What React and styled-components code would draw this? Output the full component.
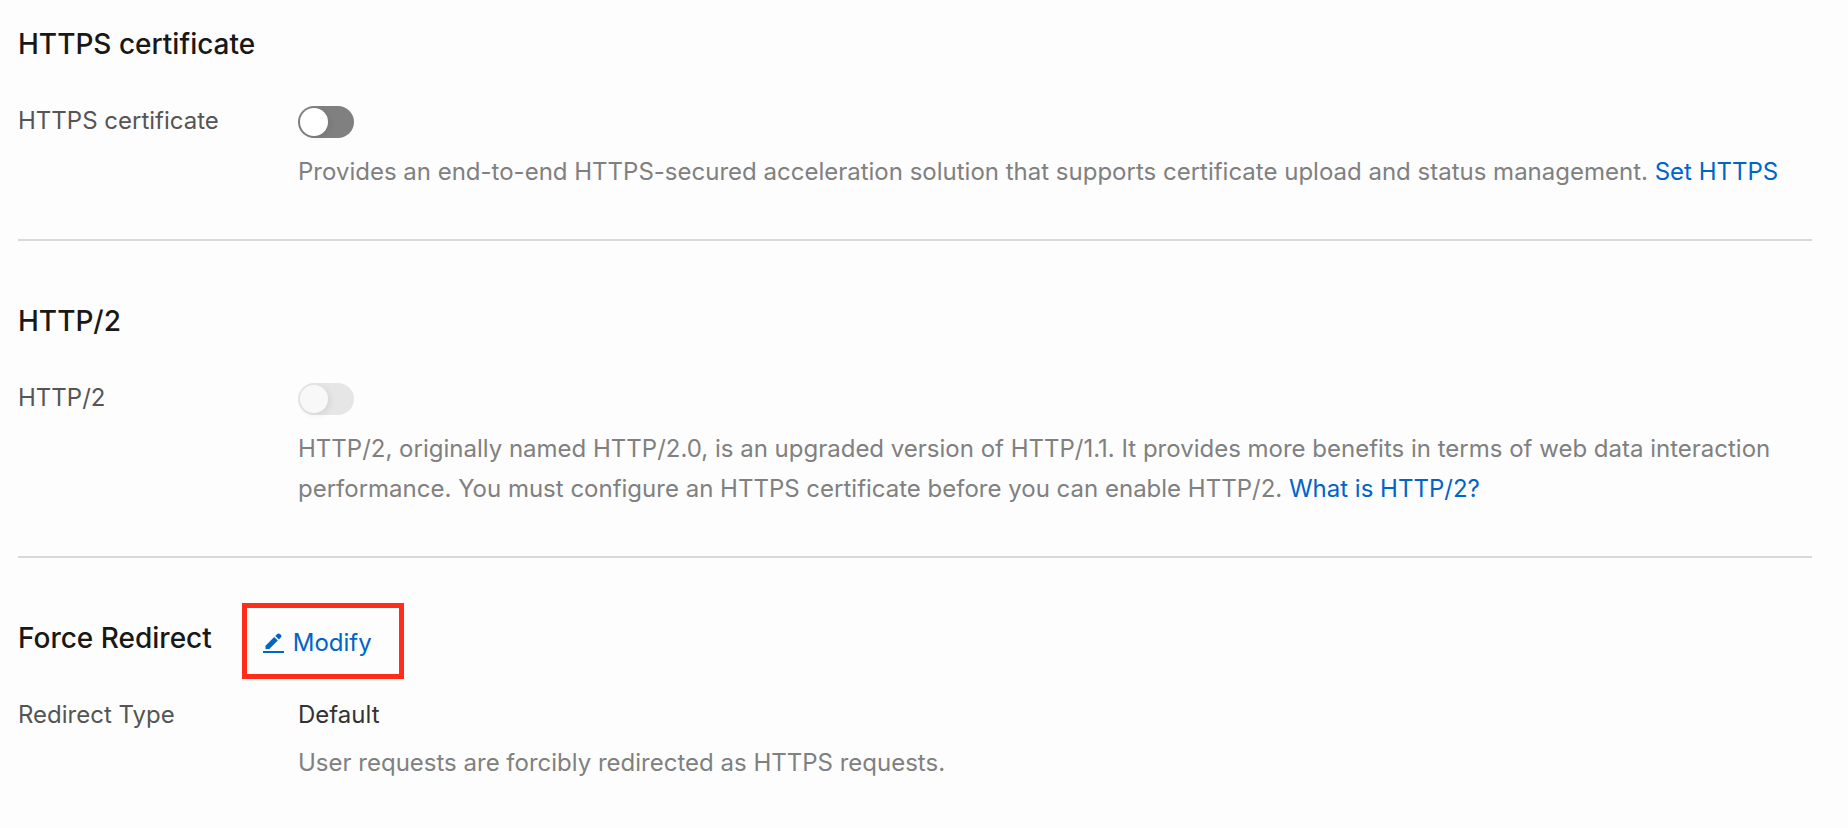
import React, { useState } from 'react';
import styled, { createGlobalStyle } from 'styled-components';

const GlobalStyle = createGlobalStyle`
  body {
    margin: 0;
    background: #fdfdfd;
    font-family: Inter, "Liberation Sans", sans-serif;
    font-size: 24px;
    line-height: 40px;
    color: #333;
  }
`

const Page = styled.main`
  padding: 0 36px 0 18px;
`

const Section = styled.section`
  padding: ${props => (props.$first ? '24px' : '60px')} 0 47px;
  border-bottom: ${props => (props.$last ? 'none' : '2px solid #d9d9d9')};
`

const Header = styled.header`
  display: flex;
  align-items: flex-start;
  gap: 30px;
  height: 40px;
  margin-bottom: 37px;
`

const Title = styled.h2`
  margin: 0;
  font-size: 28px;
  font-weight: 500;
  color: #181818;
`

const Row = styled.div`
  display: grid;
  grid-template-columns: 280px 1fr;
`

const Label = styled.label`
  color: #555;
`

const Switch = styled.input`
  appearance: none;
  display: block;
  box-sizing: border-box;
  width: 56px;
  height: 32px;
  margin: 5px 0 14px;
  padding: 2px;
  border-radius: 16px;
  background: #808080;
  cursor: pointer;

  &::before {
    content: "";
    display: block;
    width: 28px;
    height: 28px;
    border-radius: 50%;
    background: #fff;
    box-shadow: 2px 2px 6px rgba(0, 0, 0, 0.08);
  }

  &:checked {
    background: #0064c8;
  }

  &:checked::before {
    margin-left: 24px;
  }

  &:disabled {
    background: #e6e6e6;
    cursor: not-allowed;
  }

  &:disabled::before {
    background: #f8f8f8;
  }
`

const Value = styled.div`
  margin-bottom: 8px;
  color: #333;
`

const Description = styled.p`
  margin: 0;
  color: #808080;
`

const Link = styled.a`
  color: #0064c8;
  text-decoration: none;
`

const ModifyButton = styled.button`
  display: flex;
  align-items: center;
  gap: 9px;
  height: 76px;
  margin-top: -15px;
  padding: 4px 27px 0 16px;
  border: 5px solid #ff2d1a;
  background: none;
  font: inherit;
  color: #0064c8;
  cursor: pointer;
`

const EditIcon = () => (
  <svg width="21" height="21" viewBox="0 0 21 21" fill="currentColor" aria-hidden="true">
    <path d="M2.5 15.9v-3.2L11.2 4l3.6 3.6-8.5 8.3z" />
    <path d="M12.3 2.9 14.2 1q1.4-1.2 2.8 0l.8.8q1.3 1.4 0 2.8l-1.9 1.9z" />
    <path d="M0 18h21v2H0z" />
  </svg>
)

const App = () => {

  const [https, setHttps] = useState(false);

  return (
    <Page>
      <GlobalStyle />
      <Section $first>
        <Header>
          <Title>HTTPS certificate</Title>
        </Header>
        <Row>
          <Label htmlFor="https">HTTPS certificate</Label>
          <div>
            <Switch
            id="https"
            type="checkbox"
            role="switch"
            checked={https}
            onChange={event => setHttps(event.target.checked)}
            />
            <Description>
              Provides an end-to-end HTTPS-secured acceleration solution that supports certificate upload and status management.{' '}
              <Link href="#https">Set HTTPS</Link>
            </Description>
          </div>
        </Row>
      </Section>
      <Section>
        <Header>
          <Title>HTTP/2</Title>
        </Header>
        <Row>
          <Label htmlFor="http2">HTTP/2</Label>
          <div>
            <Switch id="http2" type="checkbox" role="switch" disabled />
            <Description>
              HTTP/2, originally named HTTP/2.0, is an upgraded version of HTTP/1.1. It provides more benefits in terms of web data interaction performance. You must configure an HTTPS certificate before you can enable HTTP/2.{' '}
              <Link href="#http2">What is HTTP/2?</Link>
            </Description>
          </div>
        </Row>
      </Section>
      <Section $last>
        <Header>
          <Title>Force Redirect</Title>
          <ModifyButton type="button">
            <EditIcon />
            Modify
          </ModifyButton>
        </Header>
        <Row>
          <Label as="span">Redirect Type</Label>
          <div>
            <Value>Default</Value>
            <Description>User requests are forcibly redirected as HTTPS requests.</Description>
          </div>
        </Row>
      </Section>
    </Page>
  );
};

export default App;
